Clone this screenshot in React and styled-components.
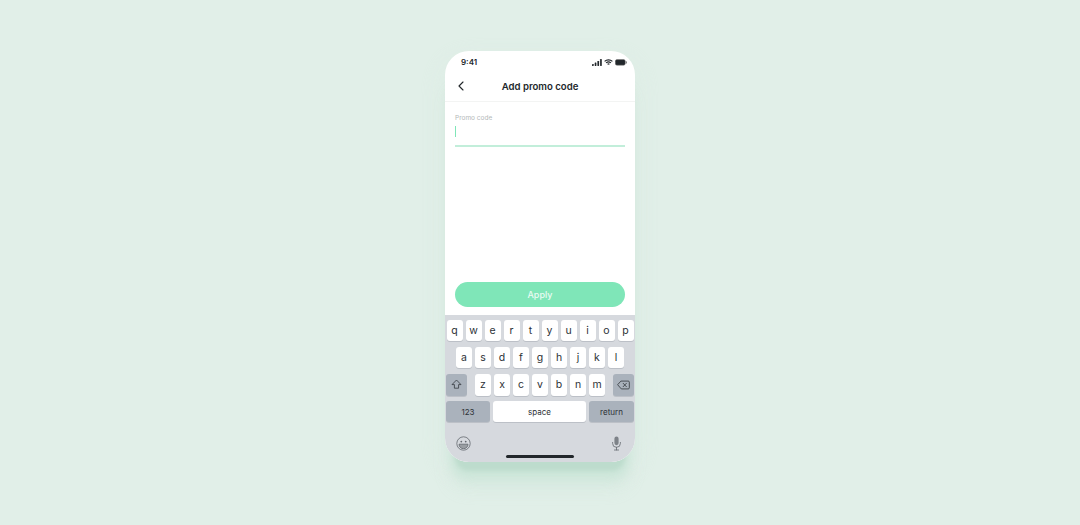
import styled, { createGlobalStyle } from 'styled-components';
import { ChevronLeft } from 'lucide-react';

const Global = createGlobalStyle`
  html, body {
    margin: 0;
    height: 100%;
    background: #e1efe8;
  }
  body {
    font-family: Inter, "Liberation Sans", sans-serif;
  }
`;

const Page = styled.div`
  width: 1080px;
  height: 525px;
  overflow: hidden;
  padding-top: 51px;
  box-sizing: border-box;
  display: flex;
  justify-content: center;
  background: #e1efe8;
`;

const PhoneShadow = styled.div`
  border-radius: 24px;
  height: 411px;
  box-shadow:
    0 19px 4px -10px #bddccd,
    0 23px 8px -5px rgba(203, 229, 216, 0.85),
    0 32px 16px -6px rgba(214, 234, 224, 0.7),
    0 10px 24px rgba(216, 235, 225, 0.45);
`;

const Phone = styled.div`
  width: 190px;
  height: 411px;
  border-radius: 24px;
  background: #fff;
  display: flex;
  flex-direction: column;
  overflow: hidden;
`;

const StatusBar = styled.div`
  height: 21px;
  padding: 6px 8px 0 16px;
  box-sizing: border-box;
  display: flex;
  align-items: flex-start;
  justify-content: space-between;
  font-size: 8px;
  font-weight: 600;
  line-height: 10px;
  color: #22272b;
`;

const StatusIcons = styled.div`
  display: flex;
  align-items: center;
  gap: 2px;
  height: 10px;
`;

const Header = styled.div`
  height: 29px;
  display: flex;
  align-items: center;
  justify-content: center;
  border-bottom: 1px solid #f3f4f3;
  position: relative;
  font-size: 9.6px;
  font-weight: 600;
  color: #22272b;
  svg {
    position: absolute;
    left: 8px;
    top: 6px;
  }
`;

const Body = styled.div`
  flex: 1;
  display: flex;
  flex-direction: column;
  padding: 12px 10px 8px;
`;

const Label = styled.div`
  font-size: 6.5px;
  color: #b4b9b9;
  line-height: 9px;
`;

const InputBox = styled.div`
  height: 18.5px;
  border-bottom: 2px solid #c2eeda;
  padding-top: 3px;
`;

const Caret = styled.div`
  width: 1px;
  height: 11px;
  background: #7fe6b8;
`;

const ApplyButton = styled.div`
  margin-top: auto;
  height: 25px;
  border-radius: 13px;
  background: #7fe6b8;
  color: #eafbf3;
  font-size: 9px;
  font-weight: 500;
  display: flex;
  align-items: center;
  justify-content: center;
`;

const Keyboard = styled.div`
  height: 147px;
  background: #d6d9de;
  padding: 5px 1px 0;
  box-sizing: border-box;
  display: flex;
  flex-direction: column;
  position: relative;
`;

const Row = styled.div`
  display: flex;
  justify-content: ${(p) => p.$justify || 'center'};
  gap: 3px;
  height: ${(p) => p.$h || 21}px;
  margin-bottom: ${(p) => p.$gap ?? 6}px;
`;

const Key = styled.div`
  width: ${(p) => p.$w || 16}px;
  background: ${(p) => (p.$dark ? '#aab2bc' : '#fff')};
  border-radius: 3px;
  display: flex;
  align-items: center;
  justify-content: center;
  font-size: ${(p) => p.$size || 10.5}px;
  color: #2c3136;
  box-shadow: 0 1px 0 rgba(130, 135, 145, 0.3);
  padding-bottom: ${(p) => (p.$size ? 0 : 1)}px;
  box-sizing: border-box;
`;

const Letters = styled.div`
  display: flex;
  gap: 3px;
`;

const Tools = styled.div`
  display: flex;
  justify-content: space-between;
  padding: 14px 12px 0 10px;
`;

const HomeBar = styled.div`
  position: absolute;
  left: 61px;
  bottom: 4px;
  width: 68px;
  height: 3px;
  border-radius: 2px;
  background: #22272b;
`;

const Signal = () => (
  <svg width="10" height="7" viewBox="0 0 10 7" fill="#22272b">
    <rect x="0" y="5" width="1.7" height="2" rx=".4" />
    <rect x="2.7" y="3.5" width="1.7" height="3.5" rx=".4" />
    <rect x="5.4" y="2" width="1.7" height="5" rx=".4" />
    <rect x="8.1" y="0" width="1.7" height="7" rx=".4" />
  </svg>
);

const Wifi = () => (
  <svg width="9" height="7" viewBox="0 0 9 7" fill="none" stroke="#22272b" strokeWidth="1.2">
    <path d="M.6 2.4a5.6 5.6 0 0 1 7.8 0" />
    <path d="M2.1 3.9a3.5 3.5 0 0 1 4.8 0" />
    <path d="M3.6 5.4a1.3 1.3 0 0 1 1.8 0" />
  </svg>
);

const Battery = () => (
  <svg width="12" height="7" viewBox="0 0 12 7">
    <rect x=".3" y=".6" width="10" height="5.6" rx="1.6" fill="#22272b" stroke="#777" strokeWidth=".5" />
    <rect x="10.9" y="2.3" width="1" height="2.3" rx=".5" fill="#777" />
  </svg>
);

const Shift = () => (
  <svg width="11" height="11" viewBox="0 0 11 11" fill="none" stroke="#33383d" strokeWidth=".8" strokeLinejoin="round">
    <path d="M5.5 1 10 5.6H7.6v3.6H3.4V5.6H1z" />
  </svg>
);

const Backspace = () => (
  <svg width="13" height="10" viewBox="0 0 14 11" fill="none" stroke="#33383d" strokeWidth=".9" strokeLinejoin="round" strokeLinecap="round">
    <path d="M4.6 1.2h7.6a1.2 1.2 0 0 1 1.2 1.2v6.2a1.2 1.2 0 0 1-1.2 1.2H4.6L.8 5.5z" />
    <path d="M6.6 3.6l3.6 3.8M10.2 3.6 6.6 7.4" />
  </svg>
);

const Emoji = () => (
  <svg width="15" height="15" viewBox="0 0 15 15" fill="none" stroke="#63686e" strokeWidth=".8">
    <circle cx="7.5" cy="7.5" r="6.7" />
    <circle cx="5.3" cy="5.6" r=".9" fill="#63686e" stroke="none" />
    <circle cx="9.7" cy="5.6" r=".9" fill="#63686e" stroke="none" />
    <path d="M3 8.2h9a4.5 4.5 0 0 1-9 0z" fill="#9a9ea3" />
  </svg>
);

const Mic = () => (
  <svg width="11" height="15" viewBox="0 0 11 15" fill="none" stroke="#63686e" strokeWidth=".8" strokeLinecap="round">
    <rect x="3.4" y=".6" width="4.2" height="8.6" rx="2.1" fill="#7d8288" stroke="none" />
    <path d="M1.6 6.4v1a3.9 3.9 0 0 0 7.8 0v-1M5.5 11.3v2.6M3.4 14h4.2" />
  </svg>
);

function App() {
  return (
    <Page>
      <Global />
      <PhoneShadow>
        <Phone>
          <StatusBar>
            <span>9:41</span>
            <StatusIcons>
              <Signal />
              <Wifi />
              <Battery />
            </StatusIcons>
          </StatusBar>
          <Header>
            <ChevronLeft size={16} strokeWidth={1.7} color="#22272b" />
            Add promo code
          </Header>
          <Body>
            <Label>Promo code</Label>
            <InputBox>
              <Caret />
            </InputBox>
            <ApplyButton>Apply</ApplyButton>
          </Body>
          <Keyboard>
            <Row>
              {'qwertyuiop'.split('').map((k) => (
                <Key key={k}>{k}</Key>
              ))}
            </Row>
            <Row>
              {'asdfghjkl'.split('').map((k) => (
                <Key key={k}>{k}</Key>
              ))}
            </Row>
            <Row $justify="space-between" $h={22} $gap={5}>
              <Key $dark $w={21}>
                <Shift />
              </Key>
              <Letters>
                {'zxcvbnm'.split('').map((k) => (
                  <Key key={k}>{k}</Key>
                ))}
              </Letters>
              <Key $dark $w={21}>
                <Backspace />
              </Key>
            </Row>
            <Row $justify="space-between" $gap={0}>
              <Key $dark $w={44} $size={8}>123</Key>
              <Key $w={93} $size={8}>space</Key>
              <Key $dark $w={45} $size={8}>return</Key>
            </Row>
            <Tools>
              <Emoji />
              <Mic />
            </Tools>
            <HomeBar />
          </Keyboard>
        </Phone>
      </PhoneShadow>
    </Page>
  );
}

export default App;
